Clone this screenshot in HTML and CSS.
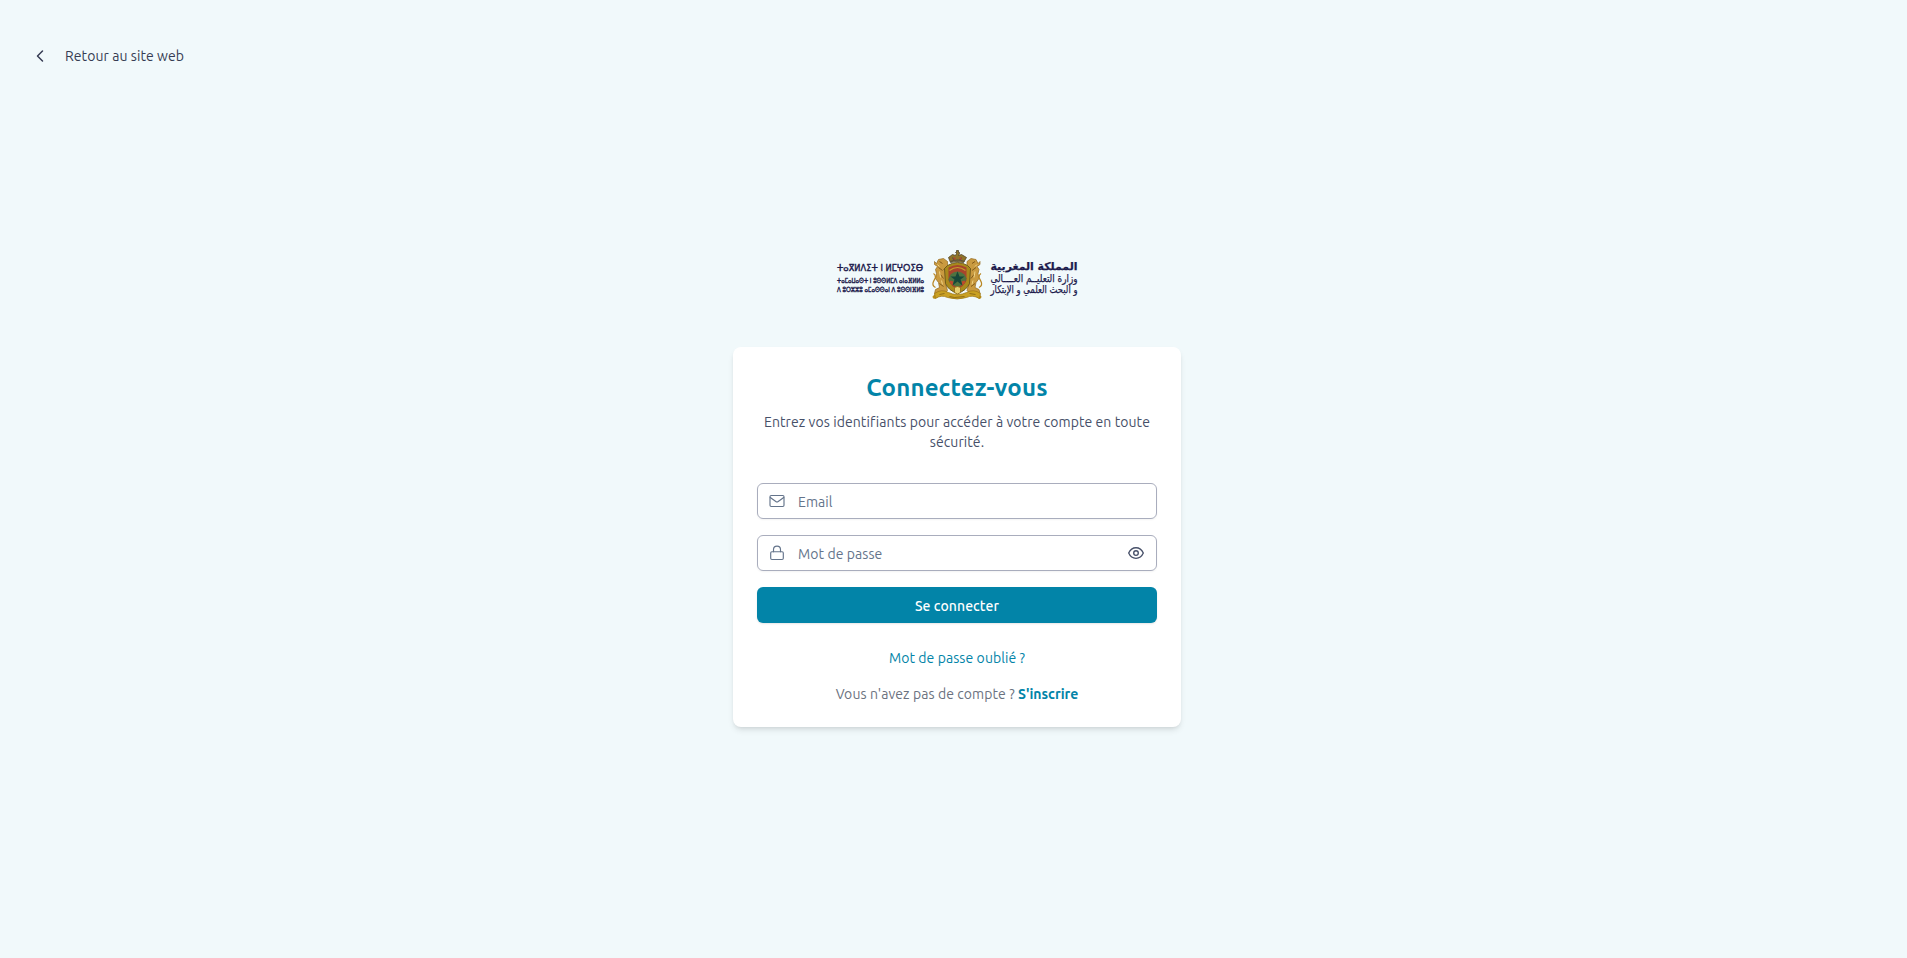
FILE: index.html
```html
<!DOCTYPE html>
<html lang="fr">
<head>
<meta charset="utf-8">
<title>Connectez-vous</title>
<link rel="stylesheet" href="styles.css">
</head>
<body>
<header class="topbar">
  <a class="back" href="#">
    <svg class="chevron" viewBox="0 0 16 16"><path d="M10.5 3 5.5 8l5 5"/></svg>
    <span class="back-label">Retour au site web</span>
  </a>
</header>
<main class="login">
  <svg class="logo" viewBox="0 0 244 54" role="img">
    <g class="tifinagh">
      <text x="2" y="22.5" font-size="9.5" textLength="86" lengthAdjust="spacingAndGlyphs">ⵜⴰⴳⵍⴷⵉⵜ ⵏ ⵍⵎⵖⵔⵉⴱ</text>
      <text x="2" y="34.5" font-size="7" textLength="87" lengthAdjust="spacingAndGlyphs">ⵜⴰⵎⴰⵡⴰⵙⵜ ⵏ ⵓⵙⵙⵍⵎⴷ ⴰⵏⴰⴼⵍⵍⴰ</text>
      <text x="2" y="43.5" font-size="7" textLength="87" lengthAdjust="spacingAndGlyphs">ⴷ ⵓⵔⵣⵣⵓ ⴰⵎⴰⵙⵙⴰⵏ ⴷ ⵓⵙⵙⵏⴼⵍⵓ</text>
    </g>
    <g transform="translate(96.5 1.5)">
      <path fill="#b98f1c" d="M13 43 4 49q-3 1-3-2l3-3 7-2M38 43l9 6q3 1 3-2l-3-3-7-2"/>
      <g id="lion">
        <path fill="#c99a40" stroke="#94681c" stroke-width=".7" d="M5 14l2-4 5-1 4 3 0 4-3 3 3 2-2 3 2 5-2 5 2 7-3 3H3l1-4 4-2-1-5-3-4 1-5-1-4 2-3-3-2 0-3z"/>
        <path fill="none" stroke="#b98622" stroke-width="1.3" d="M4 38q-4-2-2-6l2-4q0-3-2-4"/>
        <path fill="none" stroke="#6f4a12" stroke-width=".8" d="M8 12l3 2M7 18l4 3M9 25l3 4M8 34l4 3M12 20l3-2"/>
        <path fill="none" stroke="#efd385" stroke-width="1" d="M6 15l2 2M8 22l1 6M10 31l1 4"/>
      </g>
      <use href="#lion" transform="translate(51.5 0) scale(-1 1)"/>
      <path fill="#a98a1c" stroke="#66541a" stroke-width=".9" d="M16 16q10-6 20 0l3 3-1 15q-3 7-12 10-9-3-12-10l-1-15z"/>
      <path fill="#a8452c" d="M17 18q9-5 18 0v13q-3 6-9 9-6-3-9-9z"/>
      <path fill="none" stroke="#c4a02c" stroke-width="1.2" d="M18 21q8-6 16 0"/>
      <path fill="#4f7340" d="M19 25q7-6 14 0l2 4-2 5-7 4-7-4-2-4z"/>
      <path fill="#bd4a2c" d="M19 31l3 1-1 4-3-3zM33 31l-3 1 1 4 3-3z"/>
      <path fill="#17483a" d="M26 22l2 5h5l-4 3 2 6-5-4-5 4 2-6-4-3h5z"/>
      <path fill="#8f7428" stroke="#4f4328" stroke-width=".8" d="M19 13l-2-5 4-3 3 1 1-2-1-1h1V1h2v2h1v1l-1 2 3-1 5 3-3 5q-7-2-13 0z"/>
      <path fill="none" stroke="#524b43" stroke-width="1.2" d="M19 12q7-3 14 0M21 8l2 3M30 8l-2 3"/>
      <path fill="#b4442e" d="M22 8h2v2h-2zM28 8h2v2h-2z"/>
      <path fill="#c9a022" stroke="#9b7414" stroke-width=".7" d="M3 44q7-5 14-1 4 2 9 2t9-2q7-4 14 1l-1 5q-7-4-13-1-9 3-19 0-6-3-12 1z"/>
      <path fill="#e8cf70" stroke="#8d6913" stroke-width=".8" d="M23 38q3-2 6 0v5q-3 3-6 0z"/>
      <path fill="none" stroke="#765813" stroke-width=".7" d="M8 45l5-1M18 47l5 1 10-1M38 44l6 1"/>
    </g>
    <g class="arabic" direction="rtl">
      <text x="242.5" y="22" font-size="10.5" font-weight="700" textLength="87" lengthAdjust="spacingAndGlyphs">المملكة المغربية</text>
      <text x="242.5" y="33.5" font-size="10.5" textLength="87" lengthAdjust="spacingAndGlyphs">وزارة التعليــم العــــالي</text>
      <text x="242.5" y="45" font-size="10.5" textLength="87" lengthAdjust="spacingAndGlyphs">و البحث العلمي و الإبتكار</text>
    </g>
  </svg>
  <section class="card">
    <h1 class="title">Connectez-vous</h1>
    <p class="subtitle">Entrez vos identifiants pour accéder à votre compte en toute sécurité.</p>
    <form class="form">
      <label class="field">
        <svg class="icon" viewBox="0 0 16 16"><rect x="1" y="2.5" width="14" height="11" rx="1.2"/><path d="m1.3 4.5 5.5 4q1.2.8 2.4 0l5.5-4"/></svg>
        <input class="input" type="email" placeholder="Email">
      </label>
      <label class="field">
        <svg class="icon" viewBox="0 0 16 16"><rect x="1.7" y="6.7" width="12.6" height="7.8" rx="1.2"/><path d="M4.5 6.7V4.6a3.5 3.5 0 0 1 7 0v2.1"/></svg>
        <input class="input" type="password" placeholder="Mot de passe">
        <svg class="icon eye" viewBox="0 0 16 16"><path d="M.7 8Q3 2.7 8 2.7T15.3 8Q13 13.3 8 13.3T.7 8z"/><circle cx="8" cy="8" r="2.3"/></svg>
      </label>
      <button class="submit" type="button">Se connecter</button>
    </form>
    <a class="forgot" href="#">Mot de passe oublié ?</a>
    <p class="signup"><span class="question">Vous n'avez pas de compte ?</span> <a class="register" href="#">S'inscrire</a></p>
  </section>
</main>
</body>
</html>
```
FILE: styles.css
```css
* { box-sizing: border-box; }
body {
  margin: 0;
  height: 958px;
  display: flex;
  flex-direction: column;
  background: #f1f9fb;
  font: 14px/20px Ubuntu, "Noto Sans", sans-serif;
  letter-spacing: .08px;
  color: #475069;
  overflow: hidden;
}
a { text-decoration: none; }
.topbar { padding: 46px 32px 0; height: 66px; }
.back { display: inline-flex; align-items: center; gap: 17px; height: 20px; color: #363c53; }
.chevron { width: 16px; height: 16px; fill: none; stroke: currentColor; stroke-width: 1.5; stroke-linecap: round; stroke-linejoin: round; }
.login { display: flex; flex-direction: column; align-items: center; padding: 182px 0 0 7px; }
.logo { width: 244px; height: 54px; margin-bottom: 45px; fill: #1d1b4c; overflow: visible; letter-spacing: 0; }
.tifinagh { font-family: "DejaVu Sans", sans-serif; stroke: #1d1b4c; stroke-width: .45; }
.arabic { font-family: "DejaVu Sans", sans-serif; stroke: #1d1b4c; stroke-width: .25; }
.card {
  width: 448px;
  height: 380px;
  padding: 25px 24px 0;
  display: flex;
  flex-direction: column;
  align-items: center;
  background: #fff;
  border-radius: 8px;
  box-shadow: 0 4px 6px -1px rgba(0, 0, 0, .1), 0 2px 4px -2px rgba(0, 0, 0, .1);
}
.title { margin: 0; font-size: 24px; line-height: 32px; font-weight: 700; letter-spacing: .16px; color: #0284a8; white-space: nowrap; }
.subtitle { margin: 8px 0 31px; text-align: center; }
.form { display: flex; flex-direction: column; gap: 16px; width: 100%; }
.field {
  display: flex;
  align-items: center;
  gap: 13px;
  height: 36px;
  padding: 0 12px 0 11px;
  border: 1px solid #a9adbd;
  border-radius: 6px;
  box-shadow: 0 1px 2px rgba(0, 0, 0, .05);
}
.icon { flex: none; width: 16px; height: 16px; fill: none; stroke: #64748b; stroke-width: 1.15; stroke-linecap: round; stroke-linejoin: round; }
.eye { stroke: #475069; stroke-width: 1.35; }
.input { flex: 1; min-width: 0; padding: 2px 0 0; border: 0; outline: 0; background: none; font: inherit; letter-spacing: inherit; }
.input::placeholder { color: #64748b; }
.submit {
  height: 36px;
  padding: 2px 0 0;
  border: 0;
  border-radius: 6px;
  background: #0284a8;
  color: #fff;
  font: inherit;
  font-weight: 500;
  letter-spacing: inherit;
  box-shadow: 0 1px 2px rgba(0, 0, 0, .1);
}
.forgot { margin-top: 25px; color: #0284a8; }
.signup { margin: 16px 0 0; color: #6b7280; white-space: nowrap; }
.register { color: #0284a8; font-weight: 600; letter-spacing: 0; }
```
